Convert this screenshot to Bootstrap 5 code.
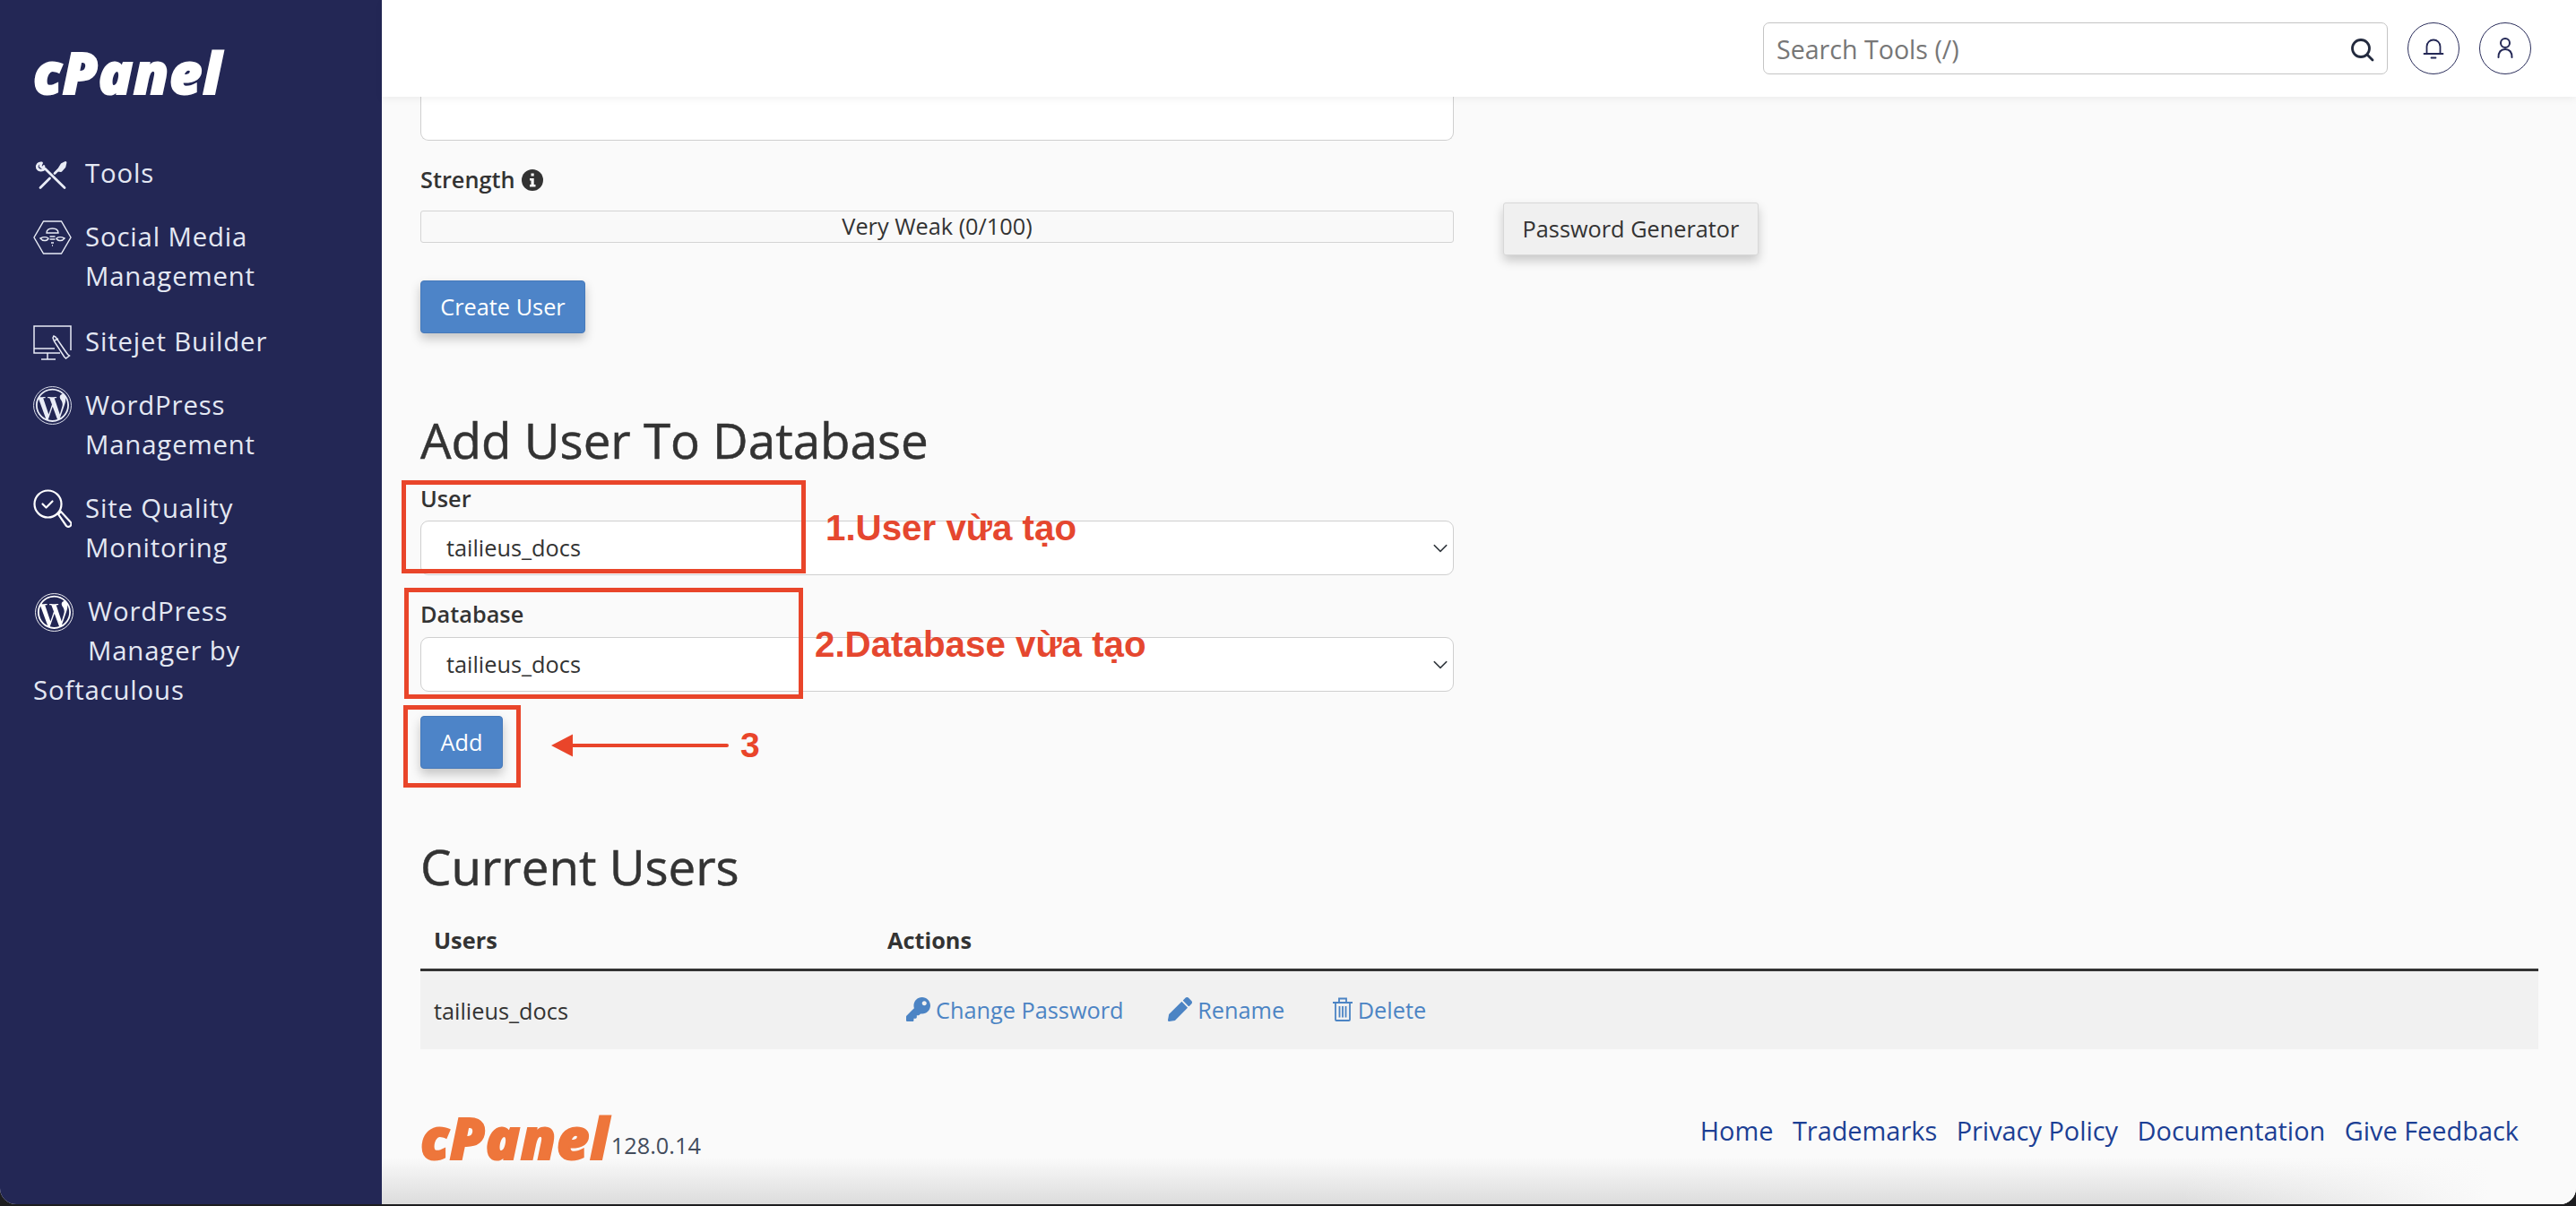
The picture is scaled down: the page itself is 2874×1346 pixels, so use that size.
<!DOCTYPE html>
<html lang="en">
<head>
<meta charset="utf-8">
<title>cPanel - Manage Databases</title>
<link href="https://cdn.jsdelivr.net/npm/bootstrap@5.3.0/dist/css/bootstrap.min.css" rel="stylesheet">
<style>
html,body{height:100%;margin:0}
body{background:#1d1d1f;font-family:"Open Sans","Noto Sans",sans-serif;font-size:25.3px;color:#333;overflow:hidden}
.cp-frame{position:relative;height:1344px;border-radius:0 0 18px 18px;overflow:hidden;background:#fafafa}
.cp-side{width:426px;flex:0 0 426px;background:#232755;color:#e4e8f3;padding:58px 0 0 37px}
.cp-logo{font-family:"Open Sans",sans-serif;font-weight:800;font-style:italic;line-height:45px;height:45px;letter-spacing:.9px;display:block;-webkit-text-stroke:2px currentColor}
.cp-logo-w{color:#fff;font-size:63px;margin-bottom:68px}
.cp-logo-o{color:#ee763b;font-size:63px}
.cp-item{display:block;color:#e4e8f3;text-decoration:none;font-size:29.33px;line-height:44px;letter-spacing:.85px;margin-bottom:27px}
.cp-item-wide{margin-bottom:29px}
.cp-item::after{content:"";display:block;clear:both}
.cp-ico{float:left;width:43px;margin-right:15px;color:#e9ecf6}
.cp-ico-tools{margin-top:9px;height:32px}
.cp-ico-hex{margin-top:4px;height:38px;margin-bottom:6px}
.cp-ico-site{margin-top:4px;height:40px}
.cp-ico-wp{margin-top:1px;height:43px;margin-bottom:2px}
.cp-ico-mag{margin-top:1px;height:43px;margin-bottom:2px}
.cp-ico-wp2{margin-top:2px;height:43px;margin-left:2px;margin-right:16px;margin-bottom:2px}
.cp-main{flex:1 1 auto;min-width:0;display:flex;flex-direction:column}
.cp-top{height:108px;flex:0 0 108px;background:#fff;box-shadow:0 3px 8px rgba(0,0,0,.05);position:relative;z-index:2;padding:25px 50px 0 0;gap:22px}
.cp-search{width:697px;height:58px;position:relative}
.cp-search .form-control{height:58px;border:1.5px solid #c4c4c4;border-radius:7px;font-size:28.6px;padding:0 60px 0 14px;color:#333;box-shadow:none}
.cp-search .form-control::placeholder{color:#777}
.cp-search svg{position:absolute;right:15px;top:17px;width:27px;height:27px;color:#232a3e}
.cp-round{width:58px;height:58px;border:1.5px solid #2c2f5c;border-radius:50%;background:#fff;color:#232755;padding:0}
.cp-round svg{width:26px;height:26px}
.cp-body{padding:0 42px 0 43px;flex:0 0 auto}
.cp-stub{height:49px;width:1153px;background:#fff;border:1.5px solid #cfcfcf;border-top:0;border-radius:0 0 9px 9px}
.cp-label{display:block;margin:0;line-height:38.5px;font-weight:600;color:#333}
.cp-label-s{margin-top:24px;font-weight:600}
.cp-info{width:24px;height:24px;vertical-align:-3px;color:#333;margin-left:1px}
.cp-meter-row{margin-top:6.5px;gap:55px;height:59px}
.cp-meter{width:1153px;height:36px;border:1.5px solid #d4d4d4;border-radius:3px;background:#f9f9f9;margin-bottom:5px;text-align:center;line-height:32px;color:#333;font-size:25.3px}
.cp-gen{width:285px;height:59px;background:#f0f0f0;border:1px solid #d8d8d8;border-radius:3px;color:#333;font-size:25.3px;padding:0;box-shadow:0 6px 12px rgba(0,0,0,.2)}
.cp-gen:hover{background:#f0f0f0;color:#333}
.cp-go{height:59px;background:#4d84c8;border:1px solid #4679ba;border-radius:4px;color:#fff;font-size:25.3px;padding:0;box-shadow:0 6px 12px rgba(0,0,0,.22)}
.cp-go:hover{background:#4d84c8;color:#fff}
.cp-go-create{width:184px;margin-top:28px;display:block}
.cp-go-add{width:92px;margin-top:27px;display:block}
.cp-h{font-size:54.7px;line-height:66px;font-weight:500;margin:0;color:#333;-webkit-text-stroke:.5px currentColor}
.cp-h-add{margin-top:86px}
.cp-h-cur{margin-top:76px}
.cp-sel{width:1153px;height:61px;font-size:25.3px;color:#333;padding:0 40px 0 28px;border:1.5px solid #cfcfcf;border-radius:9px;background-color:#fff;background-image:url("data:image/svg+xml,%3csvg xmlns='http://www.w3.org/2000/svg' viewBox='0 0 16 16'%3e%3cpath fill='none' stroke='%23343a40' stroke-linecap='round' stroke-linejoin='round' stroke-width='1.3' d='m2 5 6 6 6-6'/%3e%3c/svg%3e");background-size:24px 18px;background-position:right 2px center;box-shadow:none}
.cp-l1{margin-top:13px}
.cp-l2{margin-top:24px}
.cp-s1{margin-top:5.5px}
.cp-s2{margin-top:6.5px}
.cp-table{table-layout:fixed;margin:0;--bs-table-bg:transparent;width:2363px;color:#333}
.cp-table th{height:82px;padding:30px 15px 0;font-size:25.3px;font-weight:700;border-bottom:3px solid #333;vertical-align:top;line-height:38px;color:#333}
.cp-table td{height:89px;padding:2px 15px 0;background:#f1f1f1;vertical-align:middle;border:0;line-height:38px;font-size:25.3px;color:#333}
.cp-col1{width:506px}
.cp-act{color:#4c84c4;text-decoration:none;margin-right:47px;display:inline-flex;align-items:center;gap:6px}
.cp-act-first{margin-left:21px;margin-right:43px}
.cp-act svg{height:27px;width:auto;fill:currentColor}
.cp-foot{flex:1 1 auto;padding:76px 42px 0 43px;background:linear-gradient(to right,rgba(250,250,250,0) 82%,#fafafa 96%),linear-gradient(to bottom,rgba(222,222,222,0) 70%,#dcdcdc 100%)}
.cp-ver{font-size:25.3px;color:#434c5c;line-height:30px;align-self:flex-end;margin-left:2px;margin-bottom:-1px}
.cp-links{gap:21.5px;padding-right:22px;margin-top:-6px}
.cp-links a{color:#1c3f94;text-decoration:none;font-size:28.9px;line-height:41px}
.cp-red{position:absolute;border:5px solid #e9452a;pointer-events:none}
.cp-r1{left:448px;top:536px;width:451px;height:104px}
.cp-r2{left:451px;top:656px;width:445px;height:124px}
.cp-r3{left:450px;top:787px;width:131px;height:92px}
.cp-note{position:absolute;font-family:"Liberation Sans",Arial,sans-serif;font-weight:700;font-size:40.3px;line-height:44px;color:#e5472f;white-space:nowrap}
.cp-n1{left:921px;top:568px}
.cp-n2{left:909px;top:698px}
.cp-n3{left:826px;top:810px;color:#e9452a;font-size:39px}
.cp-arrow{position:absolute;left:613px;top:818px;width:200px;height:28px}
</style>
</head>
<body>
<div class="cp-frame d-flex">
  <aside class="cp-side">
    <span class="cp-logo cp-logo-w">cPanel</span>
    <nav>
      <a class="cp-item" href="#">
        <svg class="cp-ico cp-ico-tools" viewBox="0 0 43 32" fill="none" stroke="currentColor" stroke-width="2.8" stroke-linecap="round" stroke-linejoin="round"><path d="M35 29.500 13 8M9.500 2C6 1.500 3.500 4 4.500 7.500 6 10 9 10.500 11.500 9.500M9.500 2 8 5.500l2.500 2 1.500-2"/><path d="M8 29.500 18.500 19M24 13.500l4-4"/><path d="M28 10l4-6.500L36 1.500 35 6l-4 4.500z" fill="currentColor"/></svg>
        Tools</a>
      <a class="cp-item cp-item-wide" href="#">
        <svg class="cp-ico cp-ico-hex" viewBox="0 0 43 38" fill="none" stroke="currentColor" stroke-width="1.4"><path d="M11.500 1h20L42 19 31.500 37h-20L1 19z"/><path d="M15 14c0-3.500 3-5 6.500-5s6.500 1.500 6.500 5zM15 14h13M8 20c3-1.500 7-1.500 9 0-.5 2.500-6 4-9 0zM35 20c-3-1.500-7-1.500-9 0 .5 2.500 6 4 9 0zM18.500 18h6M18.500 21h6M20 25h3M21 28h1"/></svg>
        Social Media<br>Management</a>
      <a class="cp-item" href="#">
        <svg class="cp-ico cp-ico-site" viewBox="0 0 43 40" fill="none" stroke="currentColor" stroke-width="1.5"><path d="M30 31H1V1h41v27M1 26h23M16 31v7M9 38h16"/><path d="M22 14l1-2 2 1 11 16 2.500 3.500 2 1.500-4 3-2-2-11-17z"/><path d="M24 17l4-2"/></svg>
        Sitejet Builder</a>
      <a class="cp-item" href="#">
        <svg class="cp-ico cp-ico-wp" viewBox="0 0 560 560"><circle cx="280" cy="280" r="273" fill="none" stroke="currentColor" stroke-width="12"/><g transform="translate(30 28) scale(.975)"><path fill="currentColor" d="M256 8C119.3 8 8 119.2 8 256c0 136.700 111.300 248 248 248s248-111.300 248-248C504 119.200 392.700 8 256 8zM33 256c0-32.300 6.900-63 19.300-90.700l106.400 291.400C84.300 420.500 33 344.200 33 256zm223 223c-21.900 0-43-3.200-63-9.100l66.900-194.400 68.500 187.800c.5 1.100 1 2.100 1.600 3.100-23.100 8.100-48 12.600-74 12.600zm30.700-327.500c13.400-.7 25.500-2.100 25.500-2.100 12-1.400 10.600-19.100-1.400-18.400 0 0-36.100 2.800-59.400 2.800-21.900 0-58.700-2.800-58.700-2.800-12-.7-13.400 17.700-1.400 18.400 0 0 11.400 1.400 23.400 2.100l34.700 95.200L200.600 393l-81.200-241.500c13.400-.7 25.500-2.100 25.500-2.100 12-1.400 10.600-19.100-1.400-18.400 0 0-36.100 2.800-59.400 2.800-4.200 0-9.100-.1-14.400-.3C109.600 73 178.100 33 256 33c58 0 110.900 22.200 150.600 58.500-1-.1-1.900-.2-2.900-.2-21.900 0-37.400 19.100-37.400 39.600 0 18.400 10.600 33.900 21.900 52.300 8.500 14.800 18.400 33.900 18.400 61.500 0 19.100-7.300 41.200-17 72.100l-22.200 74.300-80.700-240.100zm81.400 297.200l68.100-196.900c12.700-31.800 17-57.200 17-79.900 0-8.200-.5-15.800-1.500-22.900 17.400 31.800 27.300 68.200 27.300 104.800-.1 82.300-44.700 154.100-110.900 192.900z"/></g></svg>
        WordPress<br>Management</a>
      <a class="cp-item" href="#">
        <svg class="cp-ico cp-ico-mag" viewBox="0 0 43 43" fill="none" stroke="#fff" stroke-width="2.2"><circle cx="16.500" cy="16.500" r="15"/><path d="M10.500 16.500l4 4 7-7" stroke-linecap="round" stroke-linejoin="round"/><path d="M28 28l3-3 10.500 11.500a2.500 2.500 0 0 1-4.500 4.500z"/></svg>
        Site Quality<br>Monitoring</a>
      <a class="cp-item" href="#">
        <svg class="cp-ico cp-ico-wp2" viewBox="0 0 560 560"><circle cx="280" cy="280" r="273" fill="none" stroke="#fff" stroke-width="12"/><g transform="translate(30 28) scale(.975)"><path fill="#fff" d="M256 8C119.3 8 8 119.2 8 256c0 136.700 111.300 248 248 248s248-111.300 248-248C504 119.200 392.700 8 256 8zM33 256c0-32.300 6.900-63 19.300-90.700l106.400 291.400C84.300 420.500 33 344.200 33 256zm223 223c-21.900 0-43-3.200-63-9.100l66.900-194.400 68.500 187.800c.5 1.100 1 2.100 1.600 3.100-23.100 8.100-48 12.600-74 12.600zm30.700-327.500c13.400-.7 25.500-2.100 25.500-2.100 12-1.400 10.600-19.100-1.400-18.400 0 0-36.100 2.800-59.400 2.800-21.900 0-58.700-2.800-58.700-2.800-12-.7-13.400 17.700-1.400 18.400 0 0 11.400 1.400 23.400 2.100l34.700 95.200L200.600 393l-81.200-241.500c13.400-.7 25.500-2.100 25.500-2.100 12-1.400 10.600-19.100-1.400-18.400 0 0-36.100 2.800-59.400 2.800-4.200 0-9.100-.1-14.400-.3C109.600 73 178.100 33 256 33c58 0 110.900 22.200 150.600 58.500-1-.1-1.900-.2-2.900-.2-21.900 0-37.400 19.100-37.400 39.600 0 18.400 10.600 33.900 21.900 52.300 8.500 14.800 18.400 33.900 18.400 61.500 0 19.100-7.300 41.200-17 72.100l-22.200 74.300-80.700-240.100zm81.400 297.200l68.100-196.900c12.700-31.800 17-57.200 17-79.900 0-8.200-.5-15.800-1.500-22.900 17.400 31.800 27.300 68.200 27.300 104.800-.1 82.300-44.700 154.100-110.900 192.900z"/></g></svg>
        WordPress<br>Manager by Softaculous</a>
    </nav>
  </aside>
  <div class="cp-main">
    <header class="cp-top d-flex justify-content-end">
      <div class="cp-search">
        <input class="form-control" type="text" placeholder="Search Tools (/)">
        <svg viewBox="0 0 27 27" fill="none" stroke="currentColor" stroke-width="2.8" stroke-linecap="round"><circle cx="12" cy="12" r="9.500"/><path d="M19 19l6 6"/></svg>
      </div>
      <button class="cp-round d-flex align-items-center justify-content-center" type="button" aria-label="Notifications">
        <svg viewBox="0 0 26 26" fill="none" stroke="currentColor" stroke-width="1.8" stroke-linecap="round"><path d="M5.500 18.500V11a7.500 7.500 0 0 1 15 0v7.500M2.500 19h21M10.500 23.500h5"/></svg>
      </button>
      <button class="cp-round d-flex align-items-center justify-content-center" type="button" aria-label="Account">
        <svg viewBox="0 0 26 26" fill="none" stroke="currentColor" stroke-width="2" stroke-linecap="round"><circle cx="13" cy="7" r="5"/><path d="M5.500 23c0-6 3-9 7.500-9s7.500 3 7.500 9"/></svg>
      </button>
    </header>
    <section class="cp-body">
      <div class="cp-stub"></div>
      <label class="cp-label cp-label-s">Strength
        <svg class="cp-info" viewBox="0 0 24 24"><circle cx="12" cy="12" r="12" fill="currentColor"/><path fill="#fafafa" d="M10.500 4.500h3.200v3h-3.200zM9 10h4.700v7H15.500v2.500h-6.500V17h1.500v-4.500H9z"/></svg>
      </label>
      <div class="d-flex align-items-center cp-meter-row">
        <div class="cp-meter">Very Weak (0/100)</div>
        <button class="btn cp-gen" type="button">Password Generator</button>
      </div>
      <button class="btn cp-go cp-go-create" type="button">Create User</button>
      <h2 class="cp-h cp-h-add">Add User To Database</h2>
      <label class="cp-label cp-l1" for="cpUser">User</label>
      <select class="form-select cp-sel cp-s1" id="cpUser"><option>tailieus_docs</option></select>
      <label class="cp-label cp-l2" for="cpDb">Database</label>
      <select class="form-select cp-sel cp-s2" id="cpDb"><option>tailieus_docs</option></select>
      <button class="btn cp-go cp-go-add" type="button">Add</button>
      <h2 class="cp-h cp-h-cur">Current Users</h2>
      <table class="table cp-table">
        <thead><tr><th class="cp-col1">Users</th><th>Actions</th></tr></thead>
        <tbody><tr><td>tailieus_docs</td><td>
          <a class="cp-act cp-act-first" href="#"><svg viewBox="0 0 512 512"><path d="M512 176C512 273 433 352 336 352c-11 0-22-1-33-3l-24 27a24 24 0 0 1-18 8h-37v40c0 13-11 24-24 24h-40v40c0 13-11 24-24 24H24c-13 0-24-11-24-24v-78c0-6 3-12 7-17l162-162C163 214 160 195 160 176 160 79 239 0 336 0c97 0 176 79 176 176zM336 128c0 27 21 48 48 48s48-21 48-48-21-48-48-48-48 21-48 48z"/></svg>Change Password</a>
          <a class="cp-act" href="#"><svg viewBox="0 0 512 512"><path d="M498 142l-46 46c-5 5-12 5-17 0L324 77c-5-5-5-12 0-17l46-46c19-19 49-19 68 0l60 60c19 19 19 49 0 68zM284 100L22 362 0 484c-3 16 12 31 28 28l122-21 262-263c5-5 5-12 0-17L301 100c-5-5-12-5-17 0z"/></svg>Rename</a>
          <a class="cp-act" href="#"><svg viewBox="0 0 22 27" style="fill:none" stroke="currentColor" stroke-width="1.8"><path d="M0 6h22M7 5V1.500h8V5M3 6.500V25a1 1 0 0 0 1 1h14a1 1 0 0 0 1-1V6.500M7.500 10v12.500M11 10v12.500M14.500 10v12.500"/></svg>Delete</a>
        </td></tr></tbody>
      </table>
    </section>
    <footer class="cp-foot d-flex justify-content-between align-items-start">
      <div class="d-flex">
        <span class="cp-logo cp-logo-o">cPanel</span>
        <span class="cp-ver">128.0.14</span>
      </div>
      <div class="d-flex cp-links">
        <a href="#">Home</a><a href="#">Trademarks</a><a href="#">Privacy Policy</a><a href="#">Documentation</a><a href="#">Give Feedback</a>
      </div>
    </footer>
  </div>
  <div class="cp-red cp-r1"></div>
  <div class="cp-red cp-r2"></div>
  <div class="cp-red cp-r3"></div>
  <div class="cp-note cp-n1">1.User vừa tạo</div>
  <div class="cp-note cp-n2">2.Database vừa tạo</div>
  <svg class="cp-arrow" viewBox="0 0 200 28"><path d="M198 14H22" stroke="#e9452a" stroke-width="4" stroke-linecap="round"/><path d="M2 14 26 1.500v25z" fill="#e9452a"/></svg>
  <div class="cp-note cp-n3">3</div>
</div>
<script src="https://cdn.jsdelivr.net/npm/bootstrap@5.3.0/dist/js/bootstrap.bundle.min.js"></script>
</body>
</html>
